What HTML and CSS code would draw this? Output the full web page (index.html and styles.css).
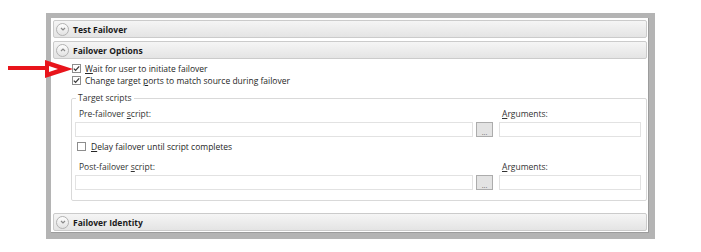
FILE: index.html
```html
<!DOCTYPE html>
<html lang="en">

<head>
  <meta charset="UTF-8">
  <title>Failover Options</title>
  <link rel="stylesheet" href="styles.css">
</head>

<body>

  <div class="frame">
    <div class="head">
      <span class="toggle"><svg viewBox="0 0 8 8" width="8" height="8"><path d="M2 3 L4 5 L6 3" /></svg></span>
      Test Failover
    </div>
    <div class="head">
      <span class="toggle"><svg viewBox="0 0 8 8" width="8" height="8"><path d="M2 5 L4 3 L6 5" /></svg></span>
      Failover Options
    </div>

    <div class="options">
      <div class="row">
        <span class="check on"><svg viewBox="0 0 9 9" width="9" height="9"><path d="M1.8 4.6 L3.6 6.4 L7.2 2.4" /></svg></span>
        <span><u>W</u>ait for user to initiate failover</span>
      </div>
      <div class="row">
        <span class="check on"><svg viewBox="0 0 9 9" width="9" height="9"><path d="M1.8 4.6 L3.6 6.4 L7.2 2.4" /></svg></span>
        <span>Change target <u>p</u>orts to match source during failover</span>
      </div>
    </div>

    <fieldset class="scripts">
      <legend>Target scripts</legend>
      <div class="grid">
        <label class="lbl">Pre-failover <u>s</u>cript:</label>
        <span></span>
        <label class="lbl args"><u>A</u>rguments:</label>

        <input class="field" type="text">
        <button class="browse">...</button>
        <input class="field" type="text">

        <div class="row delay">
          <span class="check"></span>
          <span><u>D</u>elay failover until script completes</span>
        </div>

        <label class="lbl post">Post-failover <u>s</u>cript:</label>
        <span class="post"></span>
        <label class="lbl args post"><u>A</u>rguments:</label>

        <input class="field" type="text">
        <button class="browse">...</button>
        <input class="field" type="text">
      </div>
    </fieldset>

    <div class="head last">
      <span class="toggle"><svg viewBox="0 0 8 8" width="8" height="8"><path d="M2 3 L4 5 L6 3" /></svg></span>
      Failover Identity
    </div>
  </div>

  <svg class="arrow" width="66" height="18" viewBox="0 0 66 18">
    <rect x="0" y="6" width="40" height="4" fill="#e8141b" />
    <polygon points="37,0 65,9 37,18" fill="#e8141b" />
    <polygon points="41,6 50,9 41,12" fill="#fff" />
  </svg>

</body>

</html>
```

FILE: styles.css
```css
* {
  margin: 0;
  padding: 0;
  box-sizing: border-box;
}

body {
  background: #fff;
  font-family: "Open Sans", "Noto Sans", sans-serif;
  font-size: 8.5px;
  color: #262626;
  position: relative;
  width: 701px;
  height: 252px;
  overflow: hidden;
}

.frame {
  width: 609px;
  height: 226px;
  margin: 13px 0 0 46px;
  border: 5px solid #b4b4b4;
  border-right-width: 6px;
  border-bottom-width: 6px;
  padding: 2px;
  background: #fff;
  display: flex;
  flex-direction: column;
  box-shadow: inset -1px -1px 0 #9c9c9c;
}

.head {
  height: 18px;
  border: 1px solid #cbcbcb;
  border-radius: 2px;
  background: linear-gradient(#f5f5f5, #e4e4e4);
  display: flex;
  align-items: center;
  padding-left: 2px;
  font-weight: 700;
  color: #1a1a1a;
  margin-bottom: 3px;
}

.head.last {
  margin-top: auto;
  margin-bottom: 0;
}

.toggle {
  width: 13px;
  height: 13px;
  border: 1px solid #b2b2b2;
  border-radius: 50%;
  background: linear-gradient(#fdfdfd, #e2e2e2);
  display: flex;
  align-items: center;
  justify-content: center;
  margin-right: 4px;
}

.toggle path {
  fill: none;
  stroke: #8a8a8a;
  stroke-width: 1.2;
}

.options {
  padding-left: 19px;
}

.row {
  height: 12px;
  display: flex;
  align-items: center;
}

.check {
  width: 9px;
  height: 9px;
  border: 1px solid #8d8d8d;
  background: #fff;
  margin-right: 4px;
  display: flex;
}

.check svg {
  margin: -1px;
}

.check path {
  fill: none;
  stroke: #3a3a3a;
  stroke-width: 1.3;
}

.scripts {
  margin: 6px 0 0 18px;
  border: 1px solid #d9d9d9;
  border-radius: 2px;
  padding: 4px 5px 10px 3px;
}

.scripts legend {
  padding: 0 2px;
  margin-left: 1px;
  color: #333;
  line-height: 12px;
}

.grid {
  display: grid;
  grid-template-columns: 1fr 20px 142px;
  column-gap: 3px;
}

.lbl {
  line-height: 12px;
  padding-left: 4px;
  color: #333;
}

.lbl.args {
  padding-left: 3px;
}

.lbl.post {
  margin-top: 9px;
}

.field {
  height: 15px;
  margin-top: 2px;
  width: 100%;
  border: 1px solid #e2e2e2;
  background: #fff;
  outline: none;
}

.browse {
  width: 17px;
  height: 15px;
  margin-top: 2px;
  border: 1px solid #acacac;
  background: #e3e3e3;
  color: #666;
  font-family: "Open Sans", sans-serif;
  font-size: 7px;
  line-height: 15px;
  padding-top: 2px;
}

.delay {
  grid-column: 1 / -1;
  margin-top: 3px;
  padding-left: 2px;
}

.delay .check {
  margin-right: 5px;
}

.arrow {
  position: absolute;
  left: 8px;
  top: 60px;
}
```
